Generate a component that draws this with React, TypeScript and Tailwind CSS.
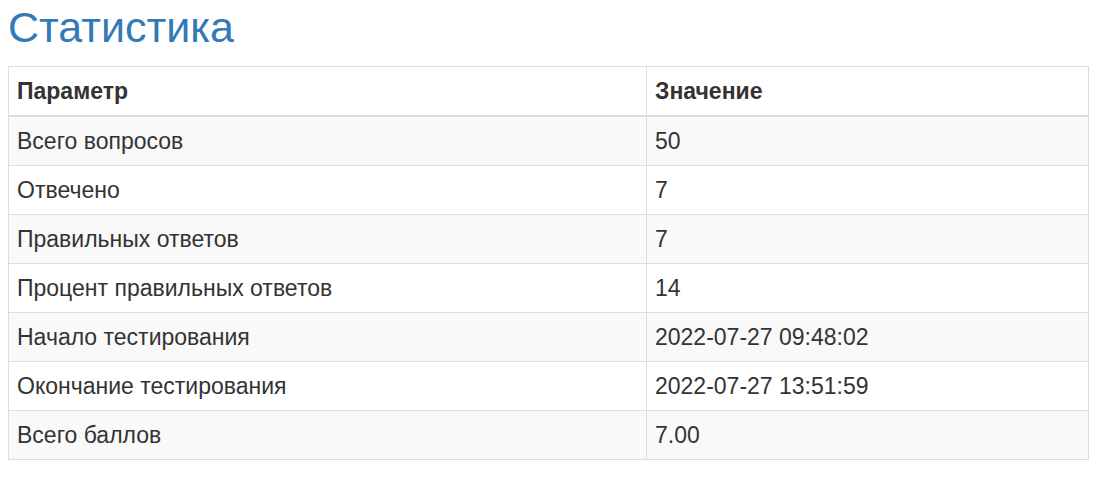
const rows: [string, string][] = [
  ['Всего вопросов', '50'],
  ['Отвечено', '7'],
  ['Правильных ответов', '7'],
  ['Процент правильных ответов', '14'],
  ['Начало тестирования', '2022-07-27 09:48:02'],
  ['Окончание тестирования', '2022-07-27 13:51:59'],
  ['Всего баллов', '7.00'],
]

export default function App() {
  return (
    <div className="px-2 text-[#333] font-['Liberation_Sans',Arial,sans-serif]">
      <h2 className="text-[43px] leading-[54px] text-[#337ab7] pt-0 mb-[12px]">Статистика</h2>
      <table className="w-[1081px] border-collapse border border-[#ddd] text-[23px] leading-[28px]">
        <thead>
          <tr>
            <th className="w-[638px] border border-[#ddd] border-b-2 px-2 py-[10px] text-left font-bold">Параметр</th>
            <th className="border border-[#ddd] border-b-2 px-2 py-[10px] text-left font-bold">Значение</th>
          </tr>
        </thead>
        <tbody>
          {rows.map(([k, v], i) => (
            <tr key={k} className={i % 2 === 0 ? 'bg-[#f9f9f9]' : 'bg-white'}>
              <td className="border border-[#ddd] px-2 py-[10px]">{k}</td>
              <td className="border border-[#ddd] px-2 py-[10px]">{v}</td>
            </tr>
          ))}
        </tbody>
      </table>
    </div>
  )
}
